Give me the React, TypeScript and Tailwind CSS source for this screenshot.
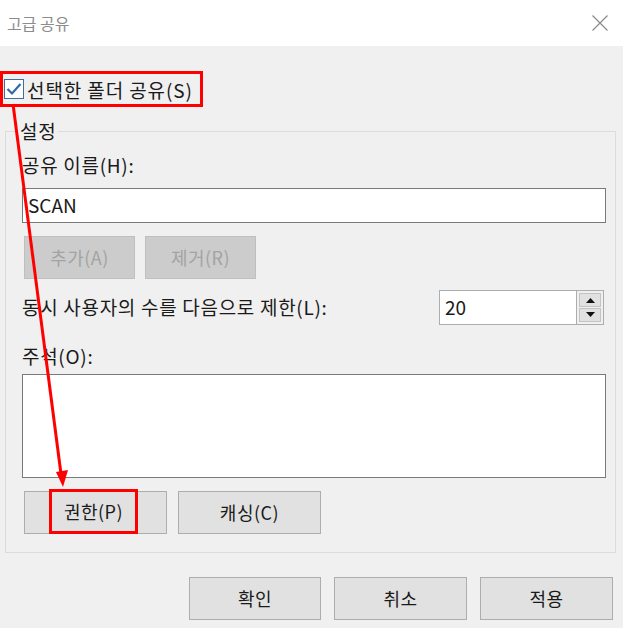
const font = { fontFamily: '"Noto Sans CJK KR", "Noto Sans", sans-serif' };

const WinButton = ({
  label,
  className = "",
  disabled = false,
}: {
  label: string;
  className?: string;
  disabled?: boolean;
}) => (
  <button
    className={
      disabled
        ? `h-[43px] border border-[#bfbfbf] bg-[#cccccc] text-[#a3a3a3] text-[18px] tracking-[0.5px] ${className}`
        : `h-[43px] border border-[#adadad] bg-[#e1e1e1] text-[#1a1a1a] text-[18px] tracking-[0.5px] ${className}`
    }
  >
    {label}
  </button>
);

const CheckIcon = () => (
  <svg width="20" height="20" viewBox="0 0 20 20">
    <rect x="0.5" y="0.5" width="19" height="19" fill="#fff" stroke="#3c6e9e" />
    <path d="M3.5 10 L8 14.5 L16.5 5" fill="none" stroke="#2f6aa6" strokeWidth="2.2" />
  </svg>
);

const Arrow = () => (
  <svg
    className="absolute left-0 top-0 pointer-events-none"
    width="623"
    height="628"
    viewBox="0 0 623 628"
  >
    <line x1="13" y1="104" x2="61" y2="474" stroke="#ff0000" strokeWidth="3" />
    <polygon points="56,472 68,470 63,487" fill="#ff0000" />
  </svg>
);

export default function App() {
  return (
    <div
      className="relative w-[623px] h-[628px] bg-[#f0f0f0] text-[#1a1a1a] overflow-hidden"
      style={font}
    >
      <div className="h-[46px] bg-white flex items-center justify-between pl-[7px] pr-[15px]">
        <span className="text-[16px] text-[#8c8c8c]">고급 공유</span>
        <svg width="16" height="16" viewBox="0 0 16 16">
          <path d="M0.5 0.5 L15.5 15.5 M15.5 0.5 L0.5 15.5" stroke="#8a8a8a" strokeWidth="1.2" />
        </svg>
      </div>

      <div className="pt-[25px]">
        <div className="w-[203px] h-[36px] border-[3px] border-[#ff0000] flex items-center gap-[3px] pl-[1px]">
          <CheckIcon />
          <span className="text-[19px] leading-none tracking-[0.9px]">선택한 폴더 공유(S)</span>
        </div>
      </div>

      <fieldset className="ml-[5px] mr-[7px] mt-[12px] h-[434px] border border-[#dcdcdc] pl-[16px] pr-[9px] text-[19px] tracking-[0.7px]">
        <legend className="ml-[-4px] px-[2px] leading-[24px]">설정</legend>

        <div className="mt-[10px] leading-[24px]">공유 이름(H):</div>
        <div className="mt-[11px] h-[35px] border border-[#7a7a7a] bg-white flex items-center pl-[5px] tracking-normal">
          SCAN
        </div>

        <div className="mt-[13px] flex gap-[10px] pl-[2px]">
          <WinButton label="추가(A)" className="w-[111px]" disabled />
          <WinButton label="제거(R)" className="w-[111px]" disabled />
        </div>

        <div className="mt-[11px] flex items-center justify-between">
          <span>동시 사용자의 수를 다음으로 제한(L):</span>
          <div className="flex h-[35px] w-[165px] border border-[#adadad] bg-white mr-[2px]">
            <div className="flex-1 flex items-center pl-[5px] tracking-normal border-r border-[#adadad]">
              20
            </div>
            <div className="w-[26px] flex flex-col gap-[1px] p-[2px] bg-[#f0f0f0]">
              <div className="flex-1 bg-[#e1e1e1] border border-[#c3c3c3] flex items-center justify-center">
                <svg width="9" height="6" viewBox="0 0 9 6">
                  <path d="M0 6 L4.5 1 L9 6 Z" fill="#111" />
                </svg>
              </div>
              <div className="flex-1 bg-[#e1e1e1] border border-[#c3c3c3] flex items-center justify-center">
                <svg width="9" height="6" viewBox="0 0 9 6">
                  <path d="M0 0 L4.5 5 L9 0 Z" fill="#111" />
                </svg>
              </div>
            </div>
          </div>
        </div>

        <div className="mt-[19px] leading-[24px]">주석(O):</div>
        <div className="mt-[6px] h-[104px] border border-[#7a7a7a] bg-white" />

        <div className="mt-[13px] flex gap-[11px] pl-[2px]">
          <div className="relative">
            <WinButton label="" className="w-[143px]" />
            <div className="absolute left-[25px] top-[-2px] w-[89px] h-[45px] border-[3px] border-[#ff0000] flex items-center justify-center text-[18px] tracking-[0.5px]">
              권한(P)
            </div>
          </div>
          <WinButton label="캐싱(C)" className="w-[143px]" />
        </div>
      </fieldset>

      <div className="mt-[24px] flex justify-end gap-[13px] pr-[10px]">
        <WinButton label="확인" className="w-[132px]" />
        <WinButton label="취소" className="w-[133px]" />
        <WinButton label="적용" className="w-[133px]" />
      </div>

      <Arrow />
    </div>
  );
}
